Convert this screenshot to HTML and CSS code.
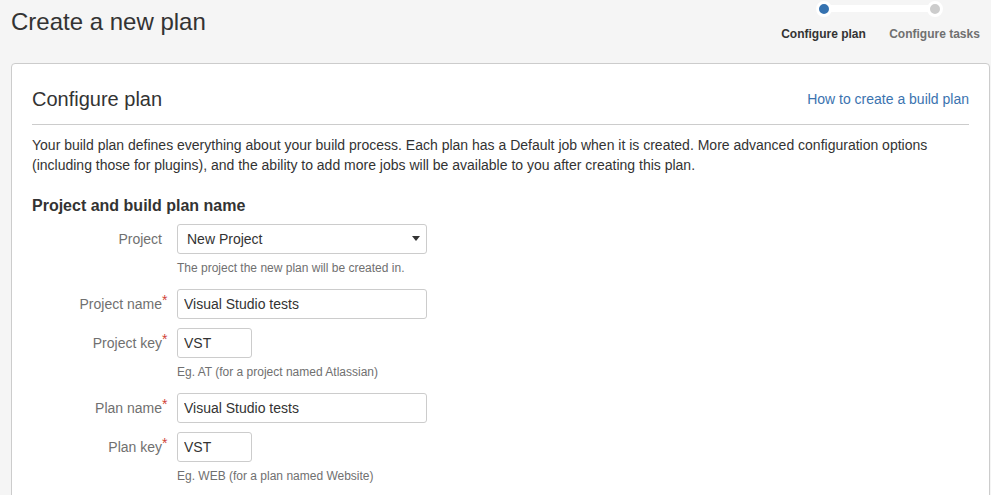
FILE: index.html
```html
<!DOCTYPE html>
<html lang="en">
  <head>
    <meta charset="UTF-8" />
    <meta name="viewport" content="width=device-width, initial-scale=1.0" />
    <title>Create a new plan</title>
    <link rel="stylesheet" href="styles.css">
  </head>
  <body>
    <!-- Page header start -->
    <header class="page-header">
      <h1>Create a new plan</h1>
      <ol class="progress-tracker">
        <li class="step current">Configure plan</li>
        <li class="step">Configure tasks</li>
      </ol>
    </header>
    <!-- Page header end -->

    <!-- Configure plan panel start -->
    <main class="panel">
      <div class="panel-header">
        <h2>Configure plan</h2>
        <a href="#" class="help-link">How to create a build plan</a>
      </div>
      <p class="intro">
        Your build plan defines everything about your build process. Each plan
        has a Default job when it is created. More advanced configuration
        options (including those for plugins), and the ability to add more jobs
        will be available to you after creating this plan.
      </p>

      <form class="plan-form">
        <h3>Project and build plan name</h3>

        <div class="field-group">
          <label>Project</label>
          <div class="field">
            <div class="select-wrap">
              <select class="select">
                <option>New Project</option>
              </select>
            </div>
            <div class="description">The project the new plan will be created in.</div>
          </div>
        </div>

        <div class="field-group">
          <label>Project name<span class="required">*</span></label>
          <div class="field">
            <input class="text" type="text" value="Visual Studio tests" />
          </div>
        </div>

        <div class="field-group">
          <label>Project key<span class="required">*</span></label>
          <div class="field">
            <input class="text short" type="text" value="VST" />
            <div class="description">Eg. AT (for a project named Atlassian)</div>
          </div>
        </div>

        <div class="field-group">
          <label>Plan name<span class="required">*</span></label>
          <div class="field">
            <input class="text" type="text" value="Visual Studio tests" />
          </div>
        </div>

        <div class="field-group">
          <label>Plan key<span class="required">*</span></label>
          <div class="field">
            <input class="text short" type="text" value="VST" />
            <div class="description">Eg. WEB (for a plan named Website)</div>
          </div>
        </div>
      </form>
    </main>
    <!-- Configure plan panel end -->
  </body>
</html>
```

FILE: styles.css
```css
*,
*::before,
*::after {
  margin: 0;
  padding: 0;
  box-sizing: border-box;
}
body {
  padding: 0 1px 0 11px;
  font-family: Arial, "Liberation Sans", sans-serif;
  font-size: 14px;
  line-height: 20px;
  color: #333;
  background-color: #f5f5f5;
}

/* header */
.page-header {
  display: flex;
  justify-content: space-between;
  align-items: flex-start;
  padding-bottom: 21px;
}
.page-header h1 {
  padding-top: 7px;
  font-size: 24px;
  font-weight: normal;
  line-height: 30px;
}
.progress-tracker {
  display: flex;
  list-style: none;
}
.step {
  position: relative;
  width: 111px;
  padding-top: 26px;
  text-align: center;
  font-size: 12px;
  font-weight: bold;
  line-height: 16px;
  color: #707070;
}
.step.current {
  color: #333;
}
.step::before {
  content: "";
  position: absolute;
  top: 1px;
  left: 50%;
  margin-left: -8px;
  width: 16px;
  height: 16px;
  border: 3px solid #fff;
  border-radius: 50%;
  background-color: #ccc;
  z-index: 1;
}
.step.current::before {
  background-color: #3572b0;
}
.step + .step::after {
  content: "";
  position: absolute;
  top: 5px;
  left: -50%;
  width: 100%;
  height: 7px;
  background-color: #fff;
}

/* panel */
.panel {
  background-color: #fff;
  border: 1px solid #ccc;
  border-radius: 4px;
  padding: 20px 20px 40px;
}
.panel-header {
  display: flex;
  justify-content: space-between;
  align-items: center;
  padding-bottom: 10px;
  border-bottom: 1px solid #ccc;
}
.panel-header h2 {
  font-size: 20px;
  font-weight: normal;
  line-height: 30px;
}
.help-link {
  color: #3b73af;
  text-decoration: none;
}
.intro {
  margin-top: 10px;
}

/* form */
.plan-form h3 {
  margin: 21px 0 4px;
  font-size: 16px;
  line-height: 20px;
}
.field-group {
  display: flex;
  padding: 4px 0 5px;
}
.field-group label {
  position: relative;
  width: 130px;
  margin-right: 15px;
  padding-top: 5px;
  text-align: right;
  color: #707070;
}
.required {
  position: absolute;
  top: 1px;
  left: 100%;
  color: #d04437;
}
.text,
.select {
  display: block;
  width: 250px;
  height: 30px;
  border: 1px solid #ccc;
  border-radius: 3px;
  background-color: #fff;
  font-family: Arial, "Liberation Sans", sans-serif;
  font-size: 14px;
  color: #333;
  outline: none;
}
.text {
  padding: 4px 6px;
}
.text.short {
  width: 75px;
}
.select-wrap {
  position: relative;
  width: 250px;
}
.select {
  appearance: none;
  -webkit-appearance: none;
  padding: 4px 24px 4px 9px;
}
.select-wrap::after {
  content: "";
  position: absolute;
  top: 12px;
  right: 7px;
  border-left: 4px solid transparent;
  border-right: 4px solid transparent;
  border-top: 5px solid #333;
  pointer-events: none;
}
.description {
  margin: 5px 0 3px;
  font-size: 12px;
  line-height: 18px;
  color: #707070;
}
```
